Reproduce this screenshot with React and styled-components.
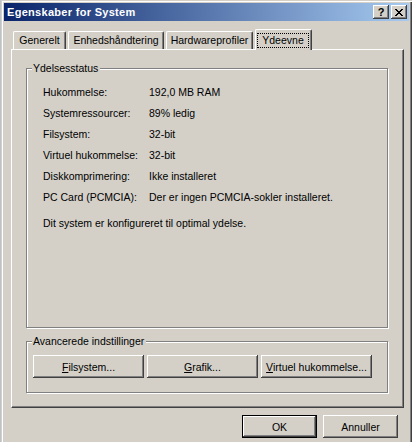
import React from 'react'
import styled, { createGlobalStyle } from 'styled-components'

const Global = createGlobalStyle`
  html, body {
    margin: 0;
    padding: 0;
    height: 442px;
    overflow: hidden;
    background: #b9c3cf;
  }
  body {
    font-family: "Liberation Sans", Arial, sans-serif;
    font-size: 10.5px;
    color: #000;
  }
`

const Window = styled.div`
  margin-left: 1px;
  width: 411px;
  height: 460px;
  box-sizing: border-box;
  padding: 3px;
  background: #d4d0c8;
  box-shadow: inset 1px 1px #d4d0c8, inset 2px 2px #fff,
    inset -1px -1px #404040, inset -2px -2px #808080;
`

const TitleBar = styled.div`
  height: 18px;
  display: flex;
  align-items: center;
  padding: 0 2px 0 3px;
  background: linear-gradient(to right, #0a246a, #a6caf0);
  color: #fff;
  font-weight: bold;
  font-size: 11px;
`

const Caption = styled.span`
  flex: 1;
  letter-spacing: 0.3px;
`

const CaptionButton = styled.div`
  width: 16px;
  height: 14px;
  margin-left: ${p => p.$gap || 0}px;
  box-sizing: border-box;
  background: #d4d0c8;
  color: #000;
  display: flex;
  align-items: center;
  justify-content: center;
  font-size: 11px;
  font-weight: bold;
  box-shadow: inset -1px -1px #404040, inset 1px 1px #fff, inset -2px -2px #808080;
`

const Body = styled.div`
  padding: 8px 5px 0 7px;
`

const TabStrip = styled.div`
  display: flex;
  align-items: flex-end;
  gap: 2px;
  height: 20px;
  padding-left: 2px;
`

const Tab = styled.div`
  position: relative;
  z-index: ${p => (p.$active ? 2 : 0)};
  box-sizing: border-box;
  width: ${p => p.$w}px;
  height: ${p => (p.$active ? 21 : 18)}px;
  margin-bottom: ${p => (p.$active ? -1 : 0)}px;
  padding: ${p => (p.$active ? '3px 2px 0 1px' : '2px 0 0 0')};
  display: flex;
  justify-content: center;
  align-items: flex-start;
  background: #d4d0c8;
  border-top: 1px solid #fff;
  border-left: 1px solid #fff;
  border-right: 1px solid #404040;
  border-radius: 2px 2px 0 0;
  box-shadow: inset -1px 0 #808080;
  line-height: 13px;
  white-space: nowrap;
`

const FocusRing = styled.span`
  display: block;
  flex: 1;
  text-align: center;
  padding: 1px 0;
  outline: 1px dotted #000;
  outline-offset: -1px;
`

const Panel = styled.div`
  width: 393px;
  height: 359px;
  box-sizing: border-box;
  display: flex;
  flex-direction: column;
  padding: 18px 14px 14px 14px;
  border-top: 1px solid #fff;
  border-left: 1px solid #fff;
  border-right: 1px solid #404040;
  border-bottom: 1px solid #404040;
  box-shadow: inset -1px -1px #808080;
`

const Group = styled.div`
  display: flex;
  flex-direction: column;
  flex: ${p => (p.$grow ? 1 : 'none')};
  margin-top: ${p => p.$top || 0}px;
  margin-right: 1px;
  border: 1px solid #808080;
  box-shadow: inset 1px 1px #fff, 1px 1px #fff;
`

const GroupLabel = styled.div`
  align-self: flex-start;
  margin: -7px 0 0 5px;
  padding: 0 2px 0 1px;
  height: 13px;
  line-height: 13px;
  background: #d4d0c8;
`

const StatusGrid = styled.div`
  display: grid;
  grid-template-columns: 106px 1fr;
  grid-auto-rows: 21px;
  align-items: center;
  margin: 6px 0 0 16px;
`

const Note = styled.div`
  margin: 6px 0 0 16px;
  height: 21px;
  line-height: 21px;
`

const ButtonRow = styled.div`
  display: flex;
  gap: 3px;
  padding: 7px 0 14px 6px;
`

const Button = styled.div`
  width: ${p => p.$w}px;
  height: 23px;
  box-sizing: border-box;
  display: flex;
  align-items: center;
  justify-content: center;
  background: #d4d0c8;
  border: ${p => (p.$default ? '1px solid #000' : 'none')};
  box-shadow: inset -1px -1px #404040, inset 1px 1px #fff, inset -2px -2px #808080;
  u {
    text-decoration: underline;
    text-underline-offset: 1px;
  }
`

const Footer = styled.div`
  display: flex;
  justify-content: flex-end;
  gap: 6px;
  margin: 7px 6px 0 0;
`

const tabs = [
  ['Generelt', 53],
  ['Enhedshåndtering', 96],
  ['Hardwareprofiler', 87],
]

const rows = [
  ['Hukommelse:', '192,0 MB RAM'],
  ['Systemressourcer:', '89% ledig'],
  ['Filsystem:', '32-bit'],
  ['Virtuel hukommelse:', '32-bit'],
  ['Diskkomprimering:', 'Ikke installeret'],
  ['PC Card (PCMCIA):', 'Der er ingen PCMCIA-sokler installeret.'],
]

function CloseGlyph() {
  return (
    <svg width="8" height="7" viewBox="0 0 8 7" shapeRendering="crispEdges">
      <path d="M0 0h2v1H0zM6 0h2v1H6zM1 1h2v1H1zM5 1h2v1H5zM2 2h4v1H2zM3 3h2v1H3zM2 4h4v1H2zM1 5h2v1H1zM5 5h2v1H5zM0 6h2v1H0zM6 6h2v1H6z" fill="#000" />
    </svg>
  )
}

export default function App() {
  return (
    <>
      <Global />
      <Window>
        <TitleBar>
          <Caption>Egenskaber for System</Caption>
          <CaptionButton>?</CaptionButton>
          <CaptionButton $gap={2}><CloseGlyph /></CaptionButton>
        </TitleBar>
        <Body>
          <TabStrip>
            {tabs.map(([label, w]) => (
              <Tab key={label} $w={w}>{label}</Tab>
            ))}
            <Tab $active $w={57}><FocusRing>Ydeevne</FocusRing></Tab>
          </TabStrip>
          <Panel>
            <Group $grow>
              <GroupLabel>Ydelsesstatus</GroupLabel>
              <StatusGrid>
                {rows.map(([k, v]) => (
                  <React.Fragment key={k}>
                    <span>{k}</span>
                    <span>{v}</span>
                  </React.Fragment>
                ))}
              </StatusGrid>
              <Note>Dit system er konfigureret til optimal ydelse.</Note>
            </Group>
            <Group $top={13}>
              <GroupLabel>Avancerede indstillinger</GroupLabel>
              <ButtonRow>
                <Button $w={111}><span><u>F</u>ilsystem...</span></Button>
                <Button $w={111}><span><u>G</u>rafik...</span></Button>
                <Button $w={111}><span><u>V</u>irtuel hukommelse...</span></Button>
              </ButtonRow>
            </Group>
          </Panel>
          <Footer>
            <Button $w={75} $default>OK</Button>
            <Button $w={75}>Annuller</Button>
          </Footer>
        </Body>
      </Window>
    </>
  )
}
